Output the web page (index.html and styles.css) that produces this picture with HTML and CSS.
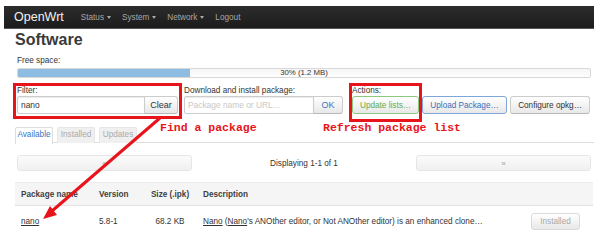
FILE: index.html
```html
<!DOCTYPE html>
<html lang="en">
<head>
    <meta charset="UTF-8">
    <title>Software - OpenWrt</title>
    <link rel="stylesheet" href="styles.css">
</head>
<body>
    <header class="navbar">
        <div class="brand">OpenWrt</div>
        <ul class="nav">
            <li>Status <span class="caret"></span></li>
            <li>System <span class="caret"></span></li>
            <li>Network <span class="caret"></span></li>
            <li>Logout</li>
        </ul>
    </header>

    <div class="page">
        <h1>Software</h1>

        <div class="free-space">
            <div class="field-label">Free space:</div>
            <div class="progress">
                <div class="progress-bar" style="width: 30%;"></div>
                <span class="progress-text">30% (1.2 MB)</span>
            </div>
        </div>

        <div class="controls">
            <div class="control-group group-filter">
                <div class="field-label">Filter:</div>
                <div class="input-append">
                    <input type="text" class="text-input" value="nano">
                    <button class="btn">Clear</button>
                </div>
            </div>
            <div class="control-group group-download">
                <div class="field-label">Download and install package:</div>
                <div class="input-append">
                    <input type="text" class="text-input" placeholder="Package name or URL…">
                    <button class="btn btn-ok">OK</button>
                </div>
            </div>
            <div class="control-group group-actions">
                <div class="field-label">Actions:</div>
                <div class="btn-row">
                    <button class="btn btn-update">Update lists…</button>
                    <button class="btn btn-upload">Upload Package…</button>
                    <button class="btn btn-config">Configure opkg…</button>
                </div>
            </div>
        </div>

        <ul class="tabs">
            <li class="tab active">Available</li>
            <li class="tab">Installed</li>
            <li class="tab">Updates</li>
        </ul>

        <div class="pager">
            <button class="pager-btn">«</button>
            <div class="pager-text">Displaying 1-1 of 1</div>
            <button class="pager-btn">»</button>
        </div>

        <div class="pkg-table">
            <div class="pkg-row pkg-head">
                <div class="cell">Package name</div>
                <div class="cell">Version</div>
                <div class="cell cell-size">Size (.ipk)</div>
                <div class="cell">Description</div>
                <div class="cell"></div>
            </div>
            <div class="pkg-row">
                <div class="cell"><a href="#">nano</a></div>
                <div class="cell">5.8-1</div>
                <div class="cell cell-size">68.2 KB</div>
                <div class="cell"><a href="#">Nano</a> (<a href="#">Nano</a>'s ANOther editor, or Not ANOther editor) is an enhanced clone…</div>
                <div class="cell cell-action"><button class="btn btn-installed">Installed</button></div>
            </div>
        </div>
    </div>

    <!-- annotations drawn over the screenshot -->
    <div class="mark mark-filter"></div>
    <div class="mark mark-actions"></div>
    <div class="note note-filter">Find a package</div>
    <div class="note note-refresh">Refresh package list</div>
    <svg class="arrow" width="600" height="241" viewBox="0 0 600 241">
        <line x1="160" y1="118" x2="52" y2="211" stroke="#e8141b" stroke-width="3"/>
        <polygon points="43,219 57,215 50,206" fill="#e8141b"/>
    </svg>
</body>
</html>
```

FILE: styles.css
```css
:root {
    --text-color: #333333;
    --muted: #aaaaaa;
    --border-color: #cccccc;
    --link-blue: #3b76c4;
    --mark-red: #e8141b;
}

* {
    margin: 0;
    padding: 0;
    box-sizing: border-box;
}

body {
    position: relative;
    width: 600px;
    height: 241px;
    overflow: hidden;
    font-family: 'Liberation Sans', Arial, sans-serif;
    font-size: 8.2px;
    color: var(--text-color);
    background-color: #ffffff;
}

/* Navbar */
.navbar {
    margin: 6px 6px 0 4px;
    height: 23px;
    display: flex;
    align-items: center;
    padding-left: 10px;
    background: linear-gradient(#2c2c2c, #1c1c1c);
    border-bottom: 1px solid #555;
}

.brand {
    font-size: 12.5px;
    color: #f2f2f2;
    margin-right: 17px;
}

.nav {
    list-style: none;
    display: flex;
    gap: 11px;
}

.nav li {
    color: #a8a8a8;
    font-size: 8.2px;
    display: flex;
    align-items: center;
}

.caret {
    display: inline-block;
    margin-left: 3px;
    border-top: 3px solid #a8a8a8;
    border-left: 2.5px solid transparent;
    border-right: 2.5px solid transparent;
}

/* Page */
.page {
    padding: 0 7px 0 15px;
}

h1 {
    margin-top: 3px;
    font-size: 16px;
    line-height: 16px;
    font-weight: 700;
    color: #3a3a3a;
}

.field-label {
    line-height: 9px;
    height: 9px;
}

.free-space {
    margin: 8px 2px 0 2px;
}

.progress {
    position: relative;
    margin-top: 3px;
    height: 10px;
    border: 1px solid #d8d8d8;
    border-radius: 2px;
    background: linear-gradient(#f6f6f6, #fdfdfd);
    overflow: hidden;
}

.progress-bar {
    height: 100%;
    background-color: #8fbde2;
}

.progress-text {
    position: absolute;
    top: 0;
    left: 0;
    right: 0;
    text-align: center;
    line-height: 8px;
    font-size: 7.8px;
}

/* Controls */
.controls {
    display: flex;
    margin: 8px 0 0 2px;
}

.control-group .field-label {
    margin-bottom: 1px;
}

.group-filter {
    width: 161px;
}

.group-filter .text-input {
    width: 128px;
}

.group-download {
    margin-left: 6px;
    width: 168px;
}

.group-download .text-input {
    width: 130px;
}

.input-append {
    display: flex;
}

.text-input {
    height: 18px;
    padding: 0 3px;
    border: 1px solid var(--border-color);
    border-radius: 2px 0 0 2px;
    box-shadow: inset 0 1px 1px rgba(0, 0, 0, 0.08);
    font-family: inherit;
    font-size: 8.4px;
    color: var(--text-color);
    outline: none;
}

.text-input::placeholder {
    color: #c8c8c8;
}

.btn {
    height: 18px;
    padding: 0 5px;
    border: 1px solid var(--border-color);
    border-bottom-color: #b8b8b8;
    border-radius: 3px;
    background: linear-gradient(#ffffff, #e8e8e8);
    font-family: inherit;
    font-size: 8.2px;
    color: var(--text-color);
}

.input-append .btn {
    margin-left: -1px;
    border-radius: 0 3px 3px 0;
}

.group-filter .btn {
    width: 34px;
    font-size: 9px;
}

.btn-ok {
    width: 30px;
    font-size: 9px;
    color: var(--link-blue);
}

.btn-row {
    display: flex;
    gap: 3px;
}

.btn-update {
    width: 67px;
    color: #5cae4f;
    border-color: #8cc97f;
}

.btn-upload {
    width: 85px;
    color: #3b6fbb;
    border-color: #7ea6d8;
}

.btn-config {
    width: 80px;
}

/* Tabs */
.tabs {
    list-style: none;
    display: flex;
    gap: 4px;
    margin-top: 13px;
    height: 16px;
    border-bottom: 1px solid #dddddd;
    margin-right: -1px;
}

.tab {
    width: 38px;
    height: 16px;
    line-height: 14px;
    text-align: center;
    border: 1px solid #e6e6e6;
    border-bottom: none;
    border-radius: 2px 2px 0 0;
    background-color: #f0f0f0;
    color: var(--muted);
}

.tab.active {
    background-color: #ffffff;
    border-color: #dddddd;
    height: 17px;
    color: var(--link-blue);
}

/* Pager */
.pager {
    display: grid;
    grid-template-columns: 175px 1fr 175px;
    align-items: center;
    margin: 12px 2px 0 2px;
}

.pager-btn {
    height: 16px;
    border: 1px solid #e6e6e6;
    border-radius: 3px;
    background: linear-gradient(#fbfbfb, #f0f0f0);
    font-family: inherit;
    font-size: 8px;
    color: #a0a0a0;
}

.pager-text {
    text-align: center;
}

/* Package table */
.pkg-table {
    margin-top: 11px;
}

.pkg-row {
    display: grid;
    grid-template-columns: 78px 50px 54px 1fr 62px;
    align-items: center;
}

.pkg-head {
    height: 24px;
    background-color: #f5f5f5;
    border-top: 1px solid #ececec;
    border-bottom: 1px solid #e2e2e2;
    font-weight: 700;
    color: #404040;
}

.pkg-row:not(.pkg-head) {
    height: 30px;
}

.cell {
    padding-left: 6px;
    white-space: nowrap;
}

.cell-size {
    padding-left: 0;
    text-align: center;
}

.cell-action {
    padding: 0;
}

.cell a {
    color: var(--text-color);
    text-decoration: underline;
}

.btn-installed {
    width: 49px;
    height: 17px;
    color: #a8a8a8;
    border-color: #dadada;
}

/* Annotations */
.mark {
    position: absolute;
    border: 3px solid var(--mark-red);
}

.mark-filter {
    left: 13px;
    top: 83px;
    width: 169px;
    height: 36px;
}

.mark-actions {
    left: 349px;
    top: 83px;
    width: 73px;
    height: 39px;
}

.note {
    position: absolute;
    font-family: 'Liberation Mono', 'Courier New', monospace;
    font-weight: 700;
    font-size: 11.5px;
    line-height: 12px;
    color: var(--mark-red);
}

.note-filter {
    left: 160px;
    top: 122px;
}

.note-refresh {
    left: 323px;
    top: 122px;
}

.arrow {
    position: absolute;
    left: 0;
    top: 0;
    pointer-events: none;
}
```
